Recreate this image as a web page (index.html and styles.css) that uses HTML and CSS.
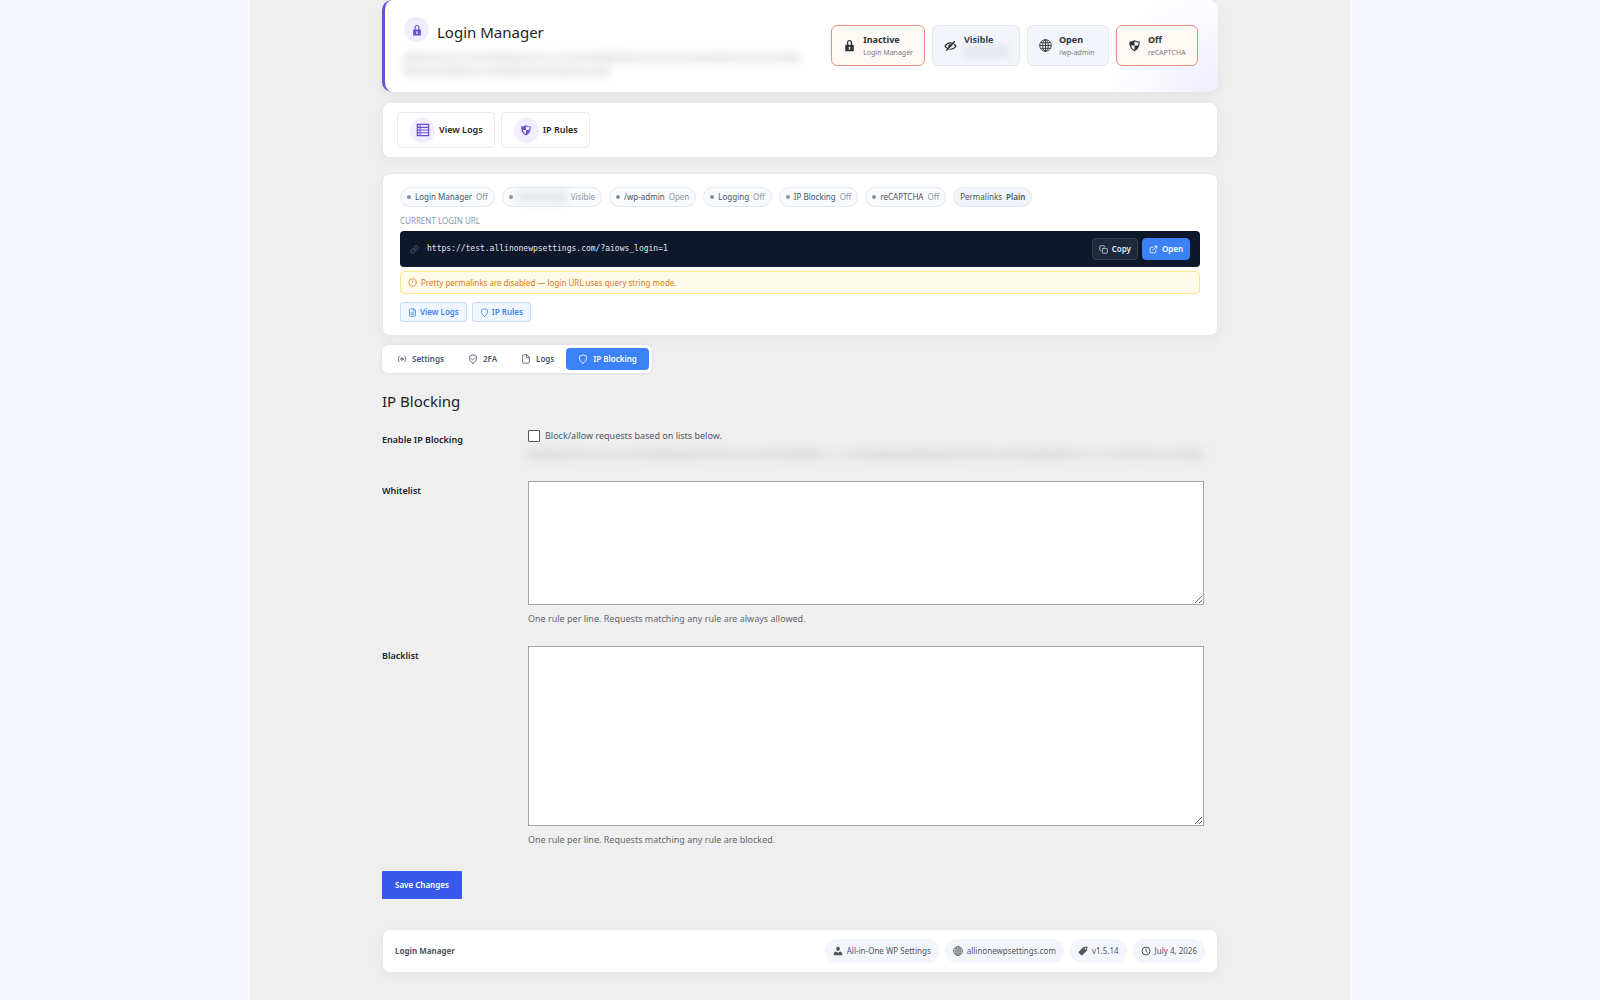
FILE: index.html
```html
<!DOCTYPE html>
<html lang="en">
<head>
	<meta charset="utf-8">
	<meta name="viewport" content="width=device-width">
	<title>Login Manager</title>
	<link rel="stylesheet" href="styles.css">
</head>
<body>
	<svg class="sprite" aria-hidden="true">
		<symbol id="lock" viewBox="0 0 20 20"><path fill="currentColor" fill-rule="evenodd" d="M15.500 9H14V5.500C14 3.300 12.200 1.500 10 1.500S6 3.300 6 5.500V9H4.500c-.5 0-1 .5-1 1v9h13v-9c0-.5-.5-1-1-1zM8 5.500c0-1.100.9-2 2-2s2 .9 2 2V9H8zm3.200 11H8.800l.4-2.200c-.4-.3-.6-.7-.6-1.100 0-.8.6-1.300 1.400-1.300s1.400.5 1.400 1.300c0 .4-.2.8-.6 1.100z"/></symbol>
		<symbol id="shield-half" viewBox="0 0 20 20"><path fill="currentColor" fill-rule="evenodd" d="M10 1.500c-2 2-5 2.500-8 2.500 0 7 2 12 8 15 6-3 8-8 8-15-3 0-6-.5-8-2.500zM10 3.600c2 1.300 4 1.800 6.300 2-.1 1.700-.4 3.100-.9 4.400H10zM10 10v7c-2.600-1.500-4.400-3.700-5.400-7z"/></symbol>
		<symbol id="rows" viewBox="0 0 20 20"><path fill="currentColor" fill-rule="evenodd" d="M1 1h18v18H1zM3 3v2.500h2V3zm3.500 0v2.500H17V3zM3 7v2.300h2V7zm3.500 0v2.300H17V7zM3 10.800v2.300h2v-2.300zm3.500 0v2.300H17v-2.300zM3 14.600V17h2v-2.400zm3.500 0V17H17v-2.400z"/></symbol>
		<symbol id="eye-off" viewBox="0 0 20 20"><path fill="none" stroke="currentColor" stroke-width="1.700" d="M1.500 11C4 7.300 7 6 10 6s6 1.300 8.500 5c-2.500 3.400-5.500 4.700-8.500 4.700S4 14.400 1.500 11z"/><path fill="currentColor" d="M6.500 10a3.800 3.800 0 0 1 7 .5L8 14.200A4 4 0 0 1 6.500 10z"/><path stroke="#f3f5fc" stroke-width="1.500" d="M5 18.500 18 4"/><path stroke="currentColor" stroke-width="2" d="M3.500 18 16.500 3.500"/></symbol>
		<symbol id="globe" viewBox="0 0 20 20"><g fill="none" stroke="currentColor" stroke-width="1.400"><circle cx="10" cy="10" r="8.900"/><ellipse cx="10" cy="10" rx="4.300" ry="8.900"/><path d="M10 1v18M1 10h18M2.500 5.700h15M2.500 14.300h15"/></g></symbol>
		<symbol id="person" viewBox="0 0 20 20"><path fill="currentColor" d="M10 1.500c2.300 0 3.700 1.800 3.700 4.200S12.200 10 10 10 6.300 8.100 6.300 5.700 7.700 1.500 10 1.500zM6 11l4 2.500L14 11c3 .6 4.500 2.500 4.500 5v2.500h-17V16c0-2.500 1.500-4.400 4.500-5z"/></symbol>
		<symbol id="tag" viewBox="0 0 20 20"><path fill="currentColor" fill-rule="evenodd" d="M11 2l7-1 1 1-1 7-9.500 9.500c-.7.7-1.500.7-2.200 0L1.500 13.700c-.7-.7-.7-1.500 0-2.200zm4 1.500a1.700 1.700 0 1 0 0 3.400 1.700 1.700 0 0 0 0-3.400z"/></symbol>
		<symbol id="clock" viewBox="0 0 20 20"><g fill="none" stroke="currentColor" stroke-width="2"><circle cx="10" cy="10" r="8"/><path d="M10 5v5.500l3 2.500"/></g></symbol>
		<symbol id="link" viewBox="0 0 24 24"><path class="line" d="M10 13a5 5 0 0 0 7.500.5l3-3a5 5 0 0 0-7-7l-1.700 1.700M14 11a5 5 0 0 0-7.500-.5l-3 3a5 5 0 0 0 7 7l1.700-1.700"/></symbol>
		<symbol id="alert" viewBox="0 0 24 24"><path class="line" d="M12 7v5M22 12a10 10 0 1 1-20 0 10 10 0 0 1 20 0z"/></symbol>
		<symbol id="copy" viewBox="0 0 24 24"><path class="line" d="M11 9h9a2 2 0 0 1 2 2v9a2 2 0 0 1-2 2h-9a2 2 0 0 1-2-2v-9a2 2 0 0 1 2-2zM5 15H4a2 2 0 0 1-2-2V4a2 2 0 0 1 2-2h9a2 2 0 0 1 2 2v1"/></symbol>
		<symbol id="external" viewBox="0 0 24 24"><path class="line" d="M18 13v6a2 2 0 0 1-2 2H5a2 2 0 0 1-2-2V8a2 2 0 0 1 2-2h6M15 3h6v6M10 14 21 3"/></symbol>
		<symbol id="file-text" viewBox="0 0 24 24"><path class="line" d="M14 2H6a2 2 0 0 0-2 2v16a2 2 0 0 0 2 2h12a2 2 0 0 0 2-2V8zM14 2v6h6M16 13H8M16 17H8"/></symbol>
		<symbol id="file" viewBox="0 0 24 24"><path class="line" d="M13 2H6a2 2 0 0 0-2 2v16a2 2 0 0 0 2 2h12a2 2 0 0 0 2-2V9zM13 2v7h7"/></symbol>
		<symbol id="shield" viewBox="0 0 24 24"><path class="line" d="M12 22s8-4 8-10V5l-8-3-8 3v7c0 6 8 10 8 10z"/></symbol>
		<symbol id="shield-check" viewBox="0 0 24 24"><path class="line" d="M12 22s8-4 8-10V5l-8-3-8 3v7c0 6 8 10 8 10zM8.500 12l2.500 2.500 4.500-5"/></symbol>
		<symbol id="signal" viewBox="0 0 24 24"><path class="line" d="M5.500 5a10 10 0 0 0 0 14M18.500 5a10 10 0 0 1 0 14M15 12a3 3 0 1 1-6 0 3 3 0 0 1 6 0zM12 11.500v1"/></symbol>
	</svg>
	<div class="page">
		<main class="wrap">
			<header class="hero">
				<div class="hero-info">
					<div class="hero-title">
						<span class="circle"><svg class="icon"><use href="#lock"/></svg></span>
						<h1>Login Manager</h1>
					</div>
					<div class="smudge smudge-long"></div>
					<div class="smudge smudge-short"></div>
				</div>
				<div class="stats">
					<div class="stat warn"><svg class="icon"><use href="#lock"/></svg><div><b>Inactive</b><small>Login Manager</small></div></div>
					<div class="stat"><svg class="icon"><use href="#eye-off"/></svg><div><b>Visible</b><div class="smudge smudge-stat"></div></div></div>
					<div class="stat"><svg class="icon"><use href="#globe"/></svg><div><b>Open</b><small>/wp-admin</small></div></div>
					<div class="stat warn"><svg class="icon"><use href="#shield-half"/></svg><div><b>Off</b><small>reCAPTCHA</small></div></div>
				</div>
			</header>

			<nav class="card shortcuts">
				<a href="#logs" class="shortcut"><span class="circle"><svg class="icon big"><use href="#rows"/></svg></span>View Logs</a>
				<a href="#rules" class="shortcut"><span class="circle"><svg class="icon"><use href="#shield-half"/></svg></span>IP Rules</a>
			</nav>

			<section class="card overview">
				<div class="pills">
					<span class="pill">Login Manager <em>Off</em></span>
					<span class="pill"><span class="smudge smudge-pill"></span> <em>Visible</em></span>
					<span class="pill">/wp-admin <em>Open</em></span>
					<span class="pill">Logging <em>Off</em></span>
					<span class="pill">IP Blocking <em>Off</em></span>
					<span class="pill">reCAPTCHA <em>Off</em></span>
					<span class="pill plain">Permalinks <b>Plain</b></span>
				</div>
				<div class="caption">CURRENT LOGIN URL</div>
				<div class="url">
					<svg class="icon"><use href="#link"/></svg>
					<code>https://test.allinonewpsettings.com/?aiows_login=1</code>
					<button type="button" class="copy"><svg class="icon"><use href="#copy"/></svg>Copy</button>
					<a href="#open" class="open"><svg class="icon"><use href="#external"/></svg>Open</a>
				</div>
				<p class="notice"><svg class="icon"><use href="#alert"/></svg>Pretty permalinks are disabled — login URL uses query string mode.</p>
				<div class="links">
					<a href="#logs"><svg class="icon"><use href="#file-text"/></svg>View Logs</a>
					<a href="#rules"><svg class="icon"><use href="#shield"/></svg>IP Rules</a>
				</div>
			</section>

			<nav class="tabs">
				<a href="#settings"><svg class="icon"><use href="#signal"/></svg>Settings</a>
				<a href="#2fa"><svg class="icon"><use href="#shield-check"/></svg>2FA</a>
				<a href="#logs"><svg class="icon"><use href="#file"/></svg>Logs</a>
				<a href="#rules" class="active"><svg class="icon"><use href="#shield"/></svg>IP Blocking</a>
			</nav>

			<form>
				<h2>IP Blocking</h2>
				<div class="row">
					<label class="name" for="enable">Enable IP Blocking</label>
					<div class="field">
						<div class="check">
							<input type="checkbox" id="enable">
							<label for="enable">Block/allow requests based on lists below.</label>
						</div>
						<div class="smudge smudge-help"></div>
					</div>
				</div>
				<div class="row">
					<label class="name" for="whitelist">Whitelist</label>
					<div class="field">
						<textarea id="whitelist" class="white"></textarea>
						<p>One rule per line. Requests matching any rule are always allowed.</p>
					</div>
				</div>
				<div class="row">
					<label class="name" for="blacklist">Blacklist</label>
					<div class="field">
						<textarea id="blacklist" class="black"></textarea>
						<p>One rule per line. Requests matching any rule are blocked.</p>
					</div>
				</div>
				<button type="submit" class="save">Save Changes</button>
			</form>

			<footer class="card bottom">
				<b>Login Manager</b>
				<div class="meta">
					<span><svg class="icon"><use href="#person"/></svg>All-in-One WP Settings</span>
					<span><svg class="icon"><use href="#globe"/></svg>allinonewpsettings.com</span>
					<span><svg class="icon"><use href="#tag"/></svg>v1.5.14</span>
					<span><svg class="icon"><use href="#clock"/></svg>July 4, 2026</span>
				</div>
			</footer>
		</main>
	</div>
</body>
</html>
```
FILE: styles.css
```css
* {
	box-sizing: border-box;
}
body {
	margin: 0;
	background: #f5f7fc;
	color: #1d2327;
	font: 9px/12px "Noto Sans", sans-serif;
}
h1, h2, p {
	margin: 0;
	font-weight: 400;
}
a {
	color: inherit;
	text-decoration: none;
}
button {
	font: inherit;
	cursor: pointer;
}
.sprite {
	display: none;
}
.line {
	fill: none;
	stroke: currentColor;
	stroke-width: 2;
	stroke-linecap: round;
	stroke-linejoin: round;
}
.icon {
	width: 10px;
	height: 10px;
	flex: none;
}
.page {
	max-width: 1100px;
	min-height: 100vh;
	margin: 0 auto;
	background: #efefef;
}
.wrap {
	max-width: 836px;
	margin: 0 auto;
}
.card {
	background: #fff;
	border: 1px solid #e8e8ec;
	border-radius: 8px;
	box-shadow: 0 4px 12px rgba(0, 0, 0, .04);
}

/* header */
.hero {
	display: flex;
	justify-content: space-between;
	align-items: flex-start;
	height: 92px;
	padding: 17px 20px 0 19px;
	border-left: 3px solid #6a50cf;
	border-radius: 10px;
	background: radial-gradient(circle at 100% 100%, #f0edff 0, #fff 110px) #fff;
	box-shadow: 0 4px 12px rgba(0, 0, 0, .05);
}
.hero-title {
	display: flex;
	gap: 8px;
	margin-bottom: 5px;
}
h1 {
	font-size: 15px;
	line-height: 31px;
}
.circle {
	display: flex;
	align-items: center;
	justify-content: center;
	width: 25px;
	height: 25px;
	border-radius: 50%;
	background: #f0edff;
	color: #6a50cf;
}
.circle .icon {
	width: 12px;
	height: 12px;
}
.circle .big {
	width: 14px;
	height: 14px;
}
.smudge {
	background: linear-gradient(90deg, #e5e6e6, #ededed 14%, #e6e7e7 25%, #eee 38%, #e6e6e6 52%, #ececec 63%, #e7e8e8 80%, #ededed 90%, #e6e6e6);
	filter: blur(4px);
}
.smudge-long {
	width: 396px;
	height: 10px;
}
.smudge-short {
	width: 206px;
	height: 11px;
	margin-top: 2px;
}
.stats {
	display: flex;
	gap: 7px;
	padding-top: 8px;
}
.stat {
	display: flex;
	gap: 7px;
	min-width: 82px;
	height: 41px;
	padding: 8px 11px 0;
	border: 1px solid #e4e7f1;
	border-radius: 6px;
	background: #f3f5fc;
	color: #2c3338;
}
.stat.warn {
	border-color: #e4917e;
	background: #fff8f5;
}
.stat .icon {
	width: 13px;
	height: 13px;
	margin-top: 5px;
}
.stat b, .stat small {
	display: block;
}
.stat small {
	font-size: 7px;
	line-height: 13px;
	color: #777b80;
}
.smudge-stat {
	width: 44px;
	height: 11px;
	background: #e1e4eb;
}

/* shortcut buttons */
.shortcuts {
	display: flex;
	gap: 6px;
	margin-top: 10px;
	padding: 9px 14px;
}
.shortcut {
	display: flex;
	align-items: center;
	gap: 4px;
	height: 36px;
	padding: 0 11px 0 12px;
	border: 1px solid #e8e8ec;
	border-radius: 5px;
	font-weight: 600;
}

/* overview */
.overview {
	margin-top: 15px;
	padding: 13px 17px;
}
.pills {
	display: flex;
	gap: 7px;
}
.pill {
	display: flex;
	align-items: center;
	gap: 4px;
	height: 20px;
	padding: 0 6px;
	border: 1px solid #e2e8f0;
	border-radius: 10px;
	background: #f8fafc;
	font-size: 8px;
	color: #475569;
}
.pill::before {
	content: "";
	width: 4px;
	height: 4px;
	border-radius: 50%;
	background: #8591a5;
}
.plain::before {
	display: none;
}
.plain {
	background: #f1f5f9;
}
.pill em {
	font-style: normal;
	color: #8c97aa;
}
.pill b {
	font-weight: 600;
}
.smudge-pill {
	width: 50px;
	height: 12px;
	background: #e5e7ea;
}
.caption {
	margin: 8px 0 4px;
	font-size: 8px;
	color: #8c97aa;
}
.url {
	display: flex;
	align-items: center;
	gap: 4px;
	height: 36px;
	padding: 0 10px;
	border-radius: 4px;
	background: #0f172a;
	color: #64748b;
}
.url code {
	flex: 1;
	margin-left: 4px;
	font: 8px/12px "DejaVu Sans Mono", monospace;
	color: #e2e8f0;
}
.url .icon, .notice .icon, .links .icon {
	width: 9px;
	height: 9px;
}
.copy, .open {
	display: flex;
	align-items: center;
	gap: 4px;
	height: 22px;
	padding: 0 6px;
	border: 1px solid #334155;
	border-radius: 4px;
	background: #1e293b;
	color: #e2e8f0;
	font-size: 8px;
	font-weight: 600;
}
.open {
	border-color: #3b82f6;
	background: #3b82f6;
	color: #fff;
}
.notice {
	display: flex;
	align-items: center;
	gap: 4px;
	height: 23px;
	margin-top: 4px;
	padding: 0 7px;
	border: 1px solid #fde68a;
	border-radius: 4px;
	background: #fffbeb;
	font-size: 8px;
	color: #d97a20;
}
.links {
	display: flex;
	gap: 5px;
	margin-top: 8px;
}
.links a {
	display: flex;
	align-items: center;
	gap: 3px;
	height: 20px;
	padding: 0 7px;
	border: 1px solid #bfdbfe;
	border-radius: 3px;
	background: #eff6ff;
	color: #3b82f6;
	font-size: 8px;
	font-weight: 600;
}

/* tabs */
.tabs {
	display: inline-flex;
	margin-top: 9px;
	padding: 3px;
	border-radius: 6px;
	background: #fff;
	box-shadow: 0 0 3px rgba(80, 90, 160, .2);
}
.tabs a {
	display: flex;
	align-items: center;
	gap: 5px;
	height: 22px;
	padding: 0 12px;
	border-radius: 4px;
	color: #475569;
	font-size: 8px;
	font-weight: 600;
}
.tabs .active {
	background: #3b82f6;
	color: #fff;
}

/* form */
h2 {
	margin: 16px 0 17px;
	font-size: 15px;
	line-height: 24px;
}
.row {
	display: grid;
	grid-template-columns: 146px 1fr;
	padding-right: 14px;
}
.name {
	padding-top: 3px;
	line-height: 14px;
	font-weight: 600;
}
.check {
	display: flex;
	align-items: center;
	gap: 5px;
	color: #50575e;
}
.check input {
	appearance: none;
	width: 12px;
	height: 12px;
	margin: 0;
	border: 1px solid #50575e;
	border-radius: 1px;
	background: #fff;
}
.check input:checked {
	background: #3858e9;
}
.smudge-help {
	height: 9px;
	margin: 8px 2px 22px 0;
	background: linear-gradient(90deg, #dadada, #e2e2e2 12%, #dcdcdc 20%, #e1e1e1 33%, #dbdbdb 42%, #e8e8e8 45%, #dadada 52%, #e0e0e0 70%, #dbdbdb 78%, #e5e5e5 84%, #ddd 90%, #e2e2e2 95%, #dadada);
}
textarea {
	display: block;
	width: 100%;
	border: 1px solid #a5a5a5;
	border-radius: 0;
	background: #fff;
}
.white {
	height: 124px;
}
.black {
	height: 180px;
}
.field p {
	margin: 7px 0 20px;
	line-height: 14px;
	color: #646970;
}
.save {
	height: 28px;
	margin-top: 4px;
	padding: 0 13px;
	border: 0;
	border-radius: 1px;
	background: #3858e9;
	color: #fff;
	font-size: 8px;
	font-weight: 600;
}

/* footer */
.bottom {
	display: flex;
	align-items: center;
	justify-content: space-between;
	margin-top: 30px;
	padding: 9px 12px;
	color: #50575e;
	font-size: 8px;
}
.meta {
	display: flex;
	gap: 6px;
}
.meta span {
	display: flex;
	align-items: center;
	gap: 4px;
	height: 24px;
	padding: 0 8px;
	border-radius: 12px;
	background: #f3f5fc;
}
```
